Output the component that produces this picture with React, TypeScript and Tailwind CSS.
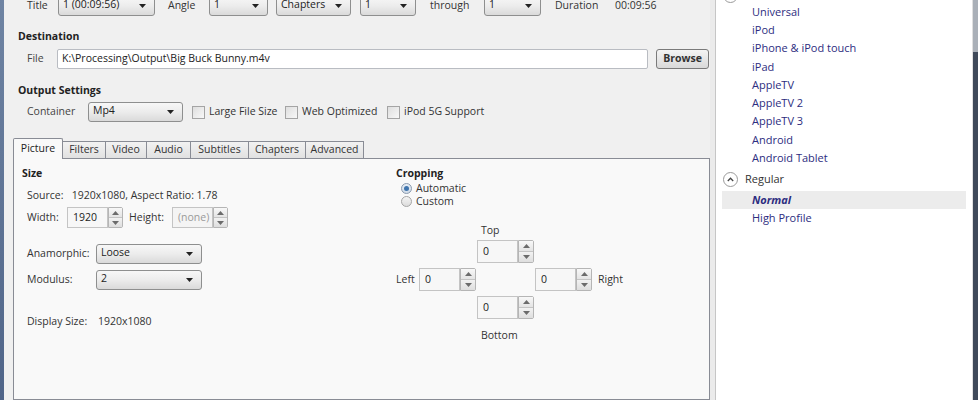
import React from "react";

function Arrow() {
  return (
    <svg width="7" height="4" viewBox="0 0 7 4" className="shrink-0">
      <path d="M0 0 L7 0 L3.5 4 Z" fill="#222" />
    </svg>
  );
}

function Select({ w, text, h = "h-[20px]" }: { w: string; text: string; h?: string }) {
  return (
    <div
      className={`${w} ${h} shrink-0 flex items-center justify-between pl-[4px] pr-[8px] border border-[#8e8f8f] rounded-[3px] bg-linear-to-b from-[#f7f7f7] via-[#ececec] to-[#dadada] text-[#222]`}
    >
      <span className="leading-none -mt-[3px]">{text}</span>
      <Arrow />
    </div>
  );
}

function Check({ label, w }: { label: string; w: string }) {
  return (
    <div className={`${w} shrink-0 flex items-center`}>
      <div className="w-[13px] h-[13px] border border-[#a4a4a4] bg-linear-to-br from-[#dedede] to-[#f8f8f8]" />
      <span className="ml-[4px] text-[#333]">{label}</span>
    </div>
  );
}

function Spinner({ w, h }: { w: string; h: string }) {
  return (
    <div className={`${w} ${h} shrink-0 flex flex-col border border-[#b5b5b5] rounded-r-[2px]`}>
      <div className="flex-1 flex items-center justify-center bg-linear-to-b from-[#f8f8f8] to-[#e4e4e4] border-b border-[#c4c4c4]">
        <svg width="7" height="4" viewBox="0 0 7 4">
          <path d="M0 4 L7 4 L3.5 0 Z" fill="#6b6b6b" />
        </svg>
      </div>
      <div className="flex-1 flex items-center justify-center bg-linear-to-b from-[#f2f2f2] to-[#dedede]">
        <svg width="7" height="4" viewBox="0 0 7 4">
          <path d="M0 0 L7 0 L3.5 4 Z" fill="#6b6b6b" />
        </svg>
      </div>
    </div>
  );
}

function SpinInput({ value, disabled = false, inW, spW, h }: { value: string; disabled?: boolean; inW: string; spW: string; h: string }) {
  return (
    <div className="flex shrink-0">
      <div
        className={`${inW} ${h} border border-[#c4c4c4] flex items-center pl-[5px] ${
          disabled ? "bg-[#f4f4f4] text-[#9a9a9a]" : "bg-[#f7f7f7] text-[#222]"
        }`}
      >
        {value}
      </div>
      <Spinner w={spW} h={h} />
    </div>
  );
}

const presets = [
  "Universal",
  "iPod",
  "iPhone & iPod touch",
  "iPad",
  "AppleTV",
  "AppleTV 2",
  "AppleTV 3",
  "Android",
  "Android Tablet",
];

function Circle() {
  return (
    <div className="w-[15px] h-[15px] rounded-full border border-[#9a9a9a] bg-white flex items-center justify-center shrink-0">
      <svg width="7" height="5" viewBox="0 0 7 5">
        <path d="M0.8 4 L3.5 1.2 L6.2 4" stroke="#444" strokeWidth="1.3" fill="none" />
      </svg>
    </div>
  );
}

export default function App() {
  const tabs = [
    ["Picture", "w-[50px]"],
    ["Filters", "w-[43px]"],
    ["Video", "w-[41px]"],
    ["Audio", "w-[44px]"],
    ["Subtitles", "w-[58px]"],
    ["Chapters", "w-[57px]"],
    ["Advanced", "w-[58px]"],
  ];
  return (
    <div className="w-[978px] h-[400px] flex overflow-hidden bg-[#f0f0f0] text-[11px] text-[#222] font-['Open_Sans','Noto_Sans',sans-serif]">
      {/* left window frame */}
      <div className="w-[4px] shrink-0 bg-linear-to-b from-[#6f84a3] to-[#4f6488]" />

      {/* main */}
      <div className="w-[706px] shrink-0 flex flex-col overflow-hidden text-[10.5px]">
        {/* row 1 */}
        <div className="h-[20px] -mt-[4px] flex items-center pl-[23px] shrink-0">
          <span className="w-[31px] shrink-0 text-[#333]">Title</span>
          <Select w="w-[97px]" text="1 (00:09:56)" />
          <span className="ml-[13px] w-[41px] shrink-0 text-[#333]">Angle</span>
          <Select w="w-[59px]" text="1" />
          <div className="ml-[8px]">
            <Select w="w-[75px]" text="Chapters" />
          </div>
          <div className="ml-[9px]">
            <Select w="w-[56px]" text="1" />
          </div>
          <span className="ml-[14px] w-[54px] shrink-0 text-[#333]">through</span>
          <Select w="w-[57px]" text="1" />
          <span className="ml-[14px] w-[60px] shrink-0 text-[#333]">Duration</span>
          <span className="text-[#333]">00:09:56</span>
        </div>

        {/* Destination */}
        <div className="mt-[13px] pl-[14px] leading-[14px] font-bold text-[#222]">Destination</div>
        <div className="mt-[6px] h-[20px] flex items-center pl-[23px] shrink-0">
          <span className="w-[30px] shrink-0 text-[#444]">File</span>
          <div className="w-[591px] h-[20px] shrink-0 bg-white border border-[#b9bcc2] rounded-[2px] flex items-center pl-[4px] text-[#222]">
            K:\Processing\Output\Big Buck Bunny.m4v
          </div>
          <div className="ml-[8px] w-[53px] h-[20px] shrink-0 border border-[#7a7a7a] rounded-[3px] bg-linear-to-b from-[#f4f4f4] to-[#d9d9d9] flex items-center justify-center font-bold text-[#333]">
            Browse
          </div>
        </div>

        {/* Output settings */}
        <div className="mt-[14px] pl-[14px] leading-[14px] font-bold text-[#222]">Output Settings</div>
        <div className="mt-[5px] h-[20px] flex items-center pl-[23px] shrink-0">
          <span className="w-[61px] shrink-0 text-[#444]">Container</span>
          <Select w="w-[95px]" text="Mp4" />
          <div className="ml-[9px] flex">
            <Check label="Large File Size" w="w-[93px]" />
            <Check label="Web Optimized" w="w-[102px]" />
            <Check label="iPod 5G Support" w="w-[120px]" />
          </div>
        </div>

        {/* tabs */}
        <div className="mt-[16px] ml-[9px] h-[20px] flex items-end shrink-0 relative z-10">
          {tabs.map(([t, w], i) =>
            i === 0 ? (
              <div
                key={t}
                className={`${w} h-[21px] -mb-[1px] shrink-0 bg-[#f9f9f9] border border-b-0 border-[#898c95] rounded-t-[2px] flex items-center justify-center text-[#222]`}
              >
                {t}
              </div>
            ) : (
              <div
                key={t}
                className={`${w} h-[17px] shrink-0 bg-linear-to-b from-[#f2f2f2] to-[#e1e1e1] border border-l-0 border-b-0 border-[#898c95] flex items-center justify-center text-[#333]`}
              >
                {t}
              </div>
            )
          )}
        </div>

        {/* tab panel */}
        <div className="ml-[9px] flex-1 bg-[#f9f9f9] border border-[#898c95] flex">
          {/* left column */}
          <div className="w-[382px] shrink-0 flex flex-col">
            <div className="mt-[7px] pl-[8px] leading-[14px] font-bold">Size</div>
            <div className="mt-[8px] pl-[13px] leading-[14px] text-[#333]">
              Source:&nbsp;&nbsp; 1920x1080, Aspect Ratio: 1.78
            </div>
            <div className="mt-[5px] pl-[13px] flex items-center">
              <span className="w-[40px] shrink-0 text-[#333]">Width:</span>
              <SpinInput value="1920" inW="w-[41px]" spW="w-[15px]" h="h-[21px]" />
              <span className="ml-[6px] w-[43px] shrink-0 text-[#333]">Height:</span>
              <SpinInput value="(none)" disabled inW="w-[41px]" spW="w-[15px]" h="h-[21px]" />
            </div>
            <div className="mt-[16px] pl-[13px] flex items-center">
              <span className="w-[69px] shrink-0 text-[#333]">Anamorphic:</span>
              <Select w="w-[106px]" text="Loose" />
            </div>
            <div className="mt-[6px] pl-[13px] flex items-center">
              <span className="w-[69px] shrink-0 text-[#333]">Modulus:</span>
              <Select w="w-[106px]" text="2" />
            </div>
            <div className="mt-[24px] pl-[13px] flex leading-[14px] text-[#333]">
              <span className="w-[71px] shrink-0">Display Size:</span>
              <span>1920x1080</span>
            </div>
          </div>

          {/* right column: cropping */}
          <div className="flex-1 flex flex-col">
            <div className="mt-[7px] leading-[14px] font-bold">Cropping</div>
            <div className="mt-[2px] pl-[5px] flex items-center h-[13px]">
              <div className="w-[11px] h-[11px] rounded-full border border-[#8a9aae] bg-linear-to-b from-[#e6edf5] to-[#cfdbe8] flex items-center justify-center">
                <div className="w-[5px] h-[5px] rounded-full bg-[#3f74ad]" />
              </div>
              <span className="ml-[4px] text-[#333]">Automatic</span>
            </div>
            <div className="pl-[5px] flex items-center h-[13px]">
              <div className="w-[11px] h-[11px] rounded-full border border-[#a5a5a5] bg-linear-to-b from-[#f4f4f4] to-[#dcdcdc]" />
              <span className="ml-[4px] text-[#333]">Custom</span>
            </div>
            <div className="mt-[15px] pl-[85px] leading-[14px] text-[#333]">Top</div>
            <div className="mt-[3px] pl-[81px] flex">
              <SpinInput value="0" inW="w-[41px]" spW="w-[16px]" h="h-[23px]" />
            </div>
            <div className="mt-[5px] flex items-center">
              <span className="w-[23px] shrink-0 text-[#333]">Left</span>
              <SpinInput value="0" inW="w-[41px]" spW="w-[16px]" h="h-[23px]" />
              <div className="ml-[59px]">
                <SpinInput value="0" inW="w-[41px]" spW="w-[16px]" h="h-[23px]" />
              </div>
              <span className="ml-[6px] text-[#333]">Right</span>
            </div>
            <div className="mt-[5px] pl-[81px] flex">
              <SpinInput value="0" inW="w-[41px]" spW="w-[16px]" h="h-[23px]" />
            </div>
            <div className="mt-[9px] pl-[85px] leading-[14px] text-[#333]">Bottom</div>
          </div>
        </div>
      </div>

      {/* separator */}
      <div className="w-[6px] shrink-0 bg-[#ebebeb] border-r border-[#c6c6c6]" />

      {/* presets panel */}
      <div className="w-[257px] shrink-0 bg-white flex flex-col border-r border-[#e0e0e0] overflow-hidden">
        <div className="h-[3px] shrink-0 relative">
          <div className="absolute left-[7px] -top-[12px]">
            <Circle />
          </div>
        </div>
        {presets.map((p) => (
          <div key={p} className="h-[18.25px] shrink-0 flex items-center pl-[36px] text-[#2d2d80]">
            {p}
          </div>
        ))}
        <div className="h-[23.5px] shrink-0 flex items-center pl-[7px]">
          <Circle />
          <span className="ml-[7px] text-[#333]">Regular</span>
        </div>
        <div className="h-[18.25px] shrink-0 mx-[6px] bg-[#ececec] flex items-center pl-[30px] font-bold italic text-[#2d2d80]">
          Normal
        </div>
        <div className="h-[18.25px] shrink-0 flex items-center pl-[36px] text-[#2d2d80]">High Profile</div>
      </div>

      {/* right window edge */}
      <div className="w-[5px] shrink-0 flex flex-col">
        <div className="h-[52px] shrink-0 bg-[#aab0b8]" />
        <div className="flex-1 bg-[#3f4a5a]" />
      </div>
    </div>
  );
}
